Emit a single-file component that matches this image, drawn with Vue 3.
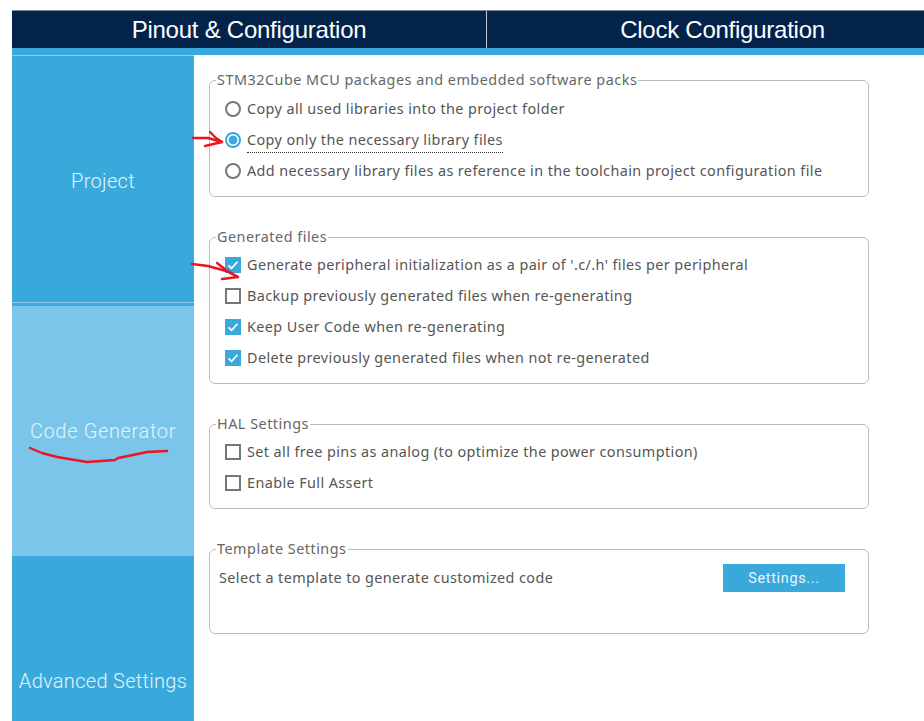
<script setup>
const groups = [
  { title: 'STM32Cube MCU packages and embedded software packs', type: 'radio', height: 127, items: [
    { label: 'Copy all used libraries into the project folder' },
    { label: 'Copy only the necessary library files', on: true, focus: true },
    { label: 'Add necessary library files as reference in the toolchain project configuration file' },
  ]},
  { title: 'Generated files', type: 'check', height: 157, items: [
    { label: "Generate peripheral initialization as a pair of '.c/.h' files per peripheral", on: true },
    { label: 'Backup previously generated files when re-generating' },
    { label: 'Keep User Code when re-generating', on: true },
    { label: 'Delete previously generated files when not re-generated', on: true },
  ]},
  { title: 'HAL Settings', type: 'check', height: 95, items: [
    { label: 'Set all free pins as analog (to optimize the power consumption)' },
    { label: 'Enable Full Assert' },
  ]},
]
</script>

<template>
  <div class="page">
    <header class="tabs">
      <div class="tab first">Pinout &amp; Configuration</div>
      <div class="tab second">Clock Configuration</div>
    </header>
    <div class="strip"></div>
    <div class="body">
      <nav class="side">
        <div class="nav project">Project</div>
        <div class="nav active">Code Generator</div>
        <div class="nav last">Advanced Settings</div>
      </nav>
      <main class="main">
        <fieldset v-for="g in groups" :key="g.title" class="group" :class="g.type" :style="{ height: g.height + 'px' }">
          <legend>{{ g.title }}</legend>
          <div v-for="it in g.items" :key="it.label" class="row">
            <span v-if="g.type === 'radio'" class="radio" :class="{ on: it.on }"></span>
            <span v-else class="check" :class="{ on: it.on }">
              <svg v-if="it.on" viewBox="0 0 16 16" width="16" height="16"><path d="M3.5 8.3 6.6 11.3 12.5 4.8" fill="none" stroke="#fff" stroke-width="1.7"/></svg>
            </span>
            <span class="label" :class="{ focus: it.focus }">{{ it.label }}</span>
          </div>
        </fieldset>
        <fieldset class="group template">
          <legend>Template Settings</legend>
          <div class="tpl">
            <span class="label tpl-label">Select a template to generate customized code</span>
            <button class="btn" type="button">Settings...</button>
          </div>
        </fieldset>
      </main>
    </div>
    <svg class="ink" width="924" height="721" viewBox="0 0 924 721">
      <g fill="none" stroke="#ea1520" stroke-width="2.4" stroke-linejoin="round" stroke-linecap="round">
        <path d="M193 138 208 138 222 142"/>
        <path d="M210 132 216 138 222 142 205 146"/>
        <path d="M192 264 208 266 226 271 238 277"/>
        <path d="M217 263 226 270 238 277 222 279"/>
        <path d="M30 448 42 453 57 457 87 462 115 460 118 458 133 455 147 452 167 451"/>
      </g>
    </svg>
  </div>
</template>

<style>
html, body { margin: 0; background: #fff; }
</style>

<style scoped>
.page {
  position: relative;
  width: 924px;
  height: 721px;
  overflow: hidden;
  box-sizing: border-box;
  padding: 10px 0 0 12px;
  background: #fff;
  font-family: "Noto Sans", "Liberation Sans", sans-serif;
}
.tabs {
  display: flex;
  width: 946px;
  height: 38px;
  background: #03234b;
  border-top: 1px solid #7d8899;
  box-sizing: border-box;
}
.tab {
  display: flex;
  align-items: center;
  justify-content: center;
  color: #fff;
  font: 24px "Liberation Sans", Arial, sans-serif;
  letter-spacing: -0.25px;
}
.tab.first {
  flex: 0 0 474px;
  border-right: 1px solid #c3cad4;
}
.tab.second { flex: 1; }
.strip {
  height: 7px;
  background: #39a9dc;
}
.body {
  display: flex;
}
.side {
  flex: 0 0 182px;
  display: flex;
  flex-direction: column;
  background: #39a9dc;
  border-top: 1px solid #8fcdea;
}
.nav {
  display: flex;
  align-items: center;
  justify-content: center;
  box-sizing: border-box;
  color: #e4f3fb;
  font: 300 20px Roboto, "Liberation Sans", sans-serif;
  letter-spacing: 0.3px;
}
.nav.project {
  flex: 0 0 247px;
  padding-top: 3px;
  border-bottom: 1px solid #8fcdea;
}
.nav.active {
  flex: 0 0 250px;
  margin-top: 3px;
  background: #7ac5e9;
  letter-spacing: 0.65px;
}
.nav.last {
  flex: 0 0 250px;
}
.main {
  padding: 15px 0 0 15px;
  display: flex;
  flex-direction: column;
  gap: 30px;
}
.group {
  box-sizing: border-box;
  width: 660px;
  margin: 0;
  padding: 0 0 0 15px;
  border: 1.5px solid #b7bcc2;
  border-radius: 6px;
  min-width: 0;
  position: relative;
}
.group legend {
  padding: 0 1px;
  margin-left: -9px;
  color: #666;
  font-size: 14.4px;
  line-height: 20px;
  letter-spacing: 0.5px;
}
.template { height: 95px; }
.row {
  display: flex;
  align-items: center;
  height: 31px;
  gap: 6px;
}
.radio .row:first-of-type { margin-top: 3px; }
.row:first-of-type { margin-top: 2px; }
.group.radio .row:first-of-type { margin-top: 3px; }
.label {
  color: #555;
  font-size: 14.4px;
  line-height: 20px;
  white-space: nowrap;
  letter-spacing: 0.4px;
}
.label.focus {
  border-bottom: 1px dotted #333;
  margin-bottom: -3px;
  padding-bottom: 2px;
}
.row > .radio {
  box-sizing: border-box;
  width: 16px;
  height: 16px;
  flex: none;
  border: 2px solid #777;
  border-radius: 50%;
  background: #fff;
}
.row > .radio.on {
  border-color: #39a9dc;
  background: radial-gradient(circle, #39a9dc 0 4px, #fff 4.8px);
}
.row > .check {
  box-sizing: border-box;
  width: 16px;
  height: 16px;
  flex: none;
  border: 2px solid #777;
  background: #fff;
  display: block;
}
.row > .check.on {
  border: 0;
  background: #39a9dc;
}
.check svg { display: block; }
.tpl {
  display: flex;
  align-items: flex-start;
  justify-content: space-between;
  padding: 5px 23px 0 0;
  margin-left: -6px;
}
.tpl-label { margin-top: 4px; }
.btn {
  width: 122px;
  height: 28px;
  border: 0;
  padding: 0;
  background: #39a9dc;
  color: #e8f5fc;
  font: 14.4px Roboto, "Liberation Sans", sans-serif;
  letter-spacing: 0.7px;
}
.ink {
  position: absolute;
  left: 0;
  top: 0;
  pointer-events: none;
}
</style>
